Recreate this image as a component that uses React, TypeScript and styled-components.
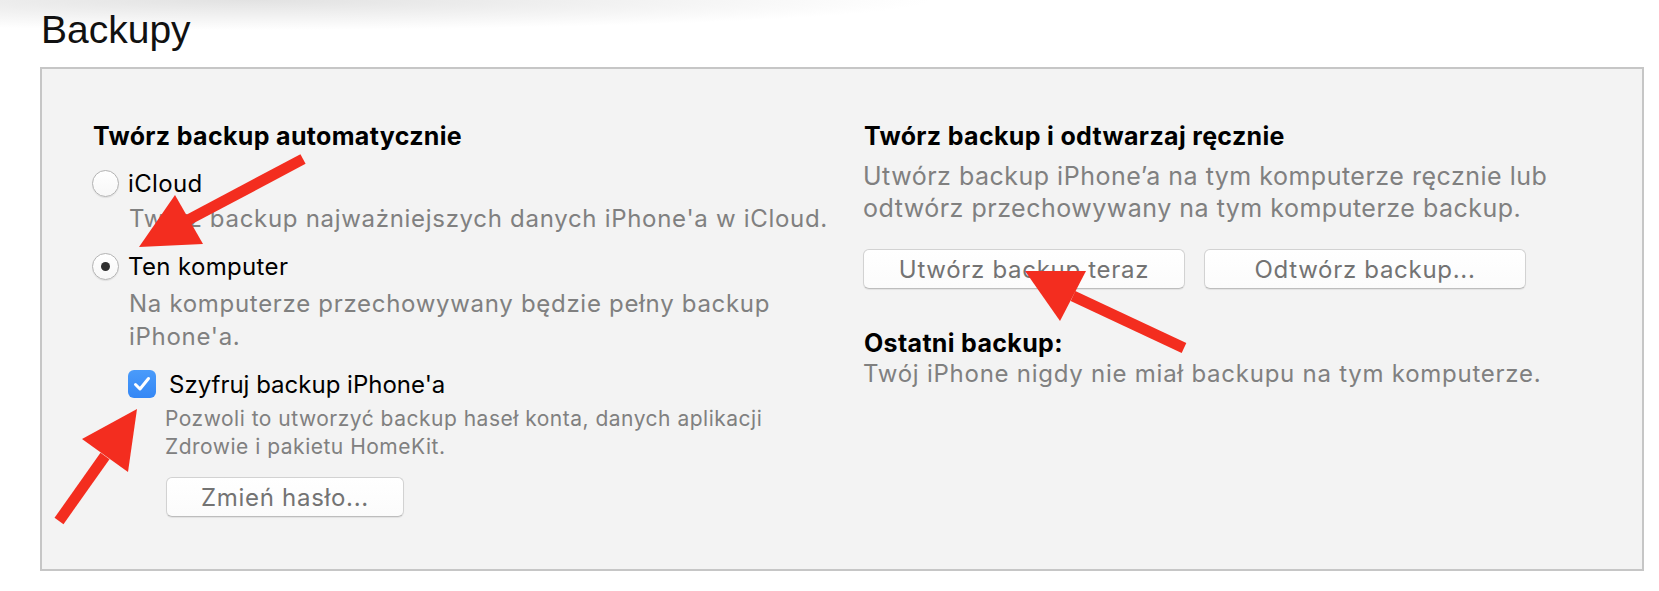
import React from "react";
import styled, { createGlobalStyle } from "styled-components";

const GlobalStyle = createGlobalStyle`
  html, body { margin: 0; padding: 0; background: #fff; }
  body { width: 1659px; height: 591px; overflow: hidden; font-family: Inter, "Noto Sans", sans-serif; }
  * { box-sizing: border-box; }
`;

const Page = styled.div`
  position: relative;
  width: 1659px;
  height: 591px;
  padding: 8px 15px 0 40px;
  background: radial-gradient(ellipse 680px 30px at 250px 0, #e2e2e2 0%, rgba(255, 255, 255, 0) 100%), #fff;
`;

const Title = styled.h1`
  margin: 0;
  font-family: "Liberation Sans", Arial, sans-serif;
  font-weight: 400;
  font-size: 39px;
  line-height: 44px;
  color: #111;
  padding-left: 1px;
`;

const Panel = styled.section`
  margin-top: 15px;
  width: 1604px;
  height: 504px;
  border: 2px solid #c6c6c6;
  background: #f3f3f3;
  display: grid;
  grid-template-columns: 771px 1fr;
  align-items: start;
  padding: 52px 0 0 50px;
`;

const Column = styled.div`
  display: flex;
  flex-direction: column;
  align-items: flex-start;
`;

const SectionTitle = styled.div<{ $mt?: number; $lh?: number }>`
  margin-top: ${(p) => p.$mt ?? 0}px;
  font-size: 25px;
  font-weight: 700;
  letter-spacing: 0.33px;
  line-height: ${(p) => p.$lh ?? 30}px;
  color: #000;
  padding-left: 1px;
  white-space: nowrap;
`;

const OptionRow = styled.label<{ $mt: number }>`
  margin-top: ${(p) => p.$mt}px;
  display: flex;
  align-items: center;
  gap: 9px;
  height: 32px;
  font-size: 24px;
  letter-spacing: 0.35px;
  color: #000;
`;

const Radio = styled.span<{ $checked?: boolean }>`
  width: 27px;
  height: 27px;
  border-radius: 50%;
  background: linear-gradient(#ffffff, #f7f7f7);
  border: 1px solid #b3b3b3;
  box-shadow: 0 1px 1px rgba(0, 0, 0, 0.08);
  display: flex;
  align-items: center;
  justify-content: center;
  &::after {
    content: "";
    display: ${(p) => (p.$checked ? "block" : "none")};
    width: 9px;
    height: 9px;
    border-radius: 50%;
    background: #2f2f2f;
  }
`;

const Desc = styled.div<{ $mt: number; $indent: number; $size: number; $lh: number; $ls: number }>`
  margin-top: ${(p) => p.$mt}px;
  padding-left: ${(p) => p.$indent}px;
  font-size: ${(p) => p.$size}px;
  line-height: ${(p) => p.$lh}px;
  letter-spacing: ${(p) => p.$ls}px;
  color: #808080;
  white-space: nowrap;
`;

const CheckRow = styled.label<{ $mt: number }>`
  margin-top: ${(p) => p.$mt}px;
  padding-left: 36px;
  display: flex;
  align-items: center;
  gap: 13px;
  height: 32px;
  font-size: 24px;
  color: #000;
`;

const CheckBox = styled.span`
  width: 28px;
  height: 28px;
  border-radius: 6px;
  background: linear-gradient(#4a9bfa, #3487f5);
  display: flex;
  align-items: center;
  justify-content: center;
`;

const Button = styled.button<{ $w: number; $mt?: number; $ml?: number }>`
  margin-top: ${(p) => p.$mt ?? 0}px;
  margin-left: ${(p) => p.$ml ?? 0}px;
  width: ${(p) => p.$w}px;
  height: 40px;
  padding: 0;
  border: 1px solid #d2d2d2;
  border-bottom-color: #bdbdbd;
  border-radius: 6px;
  background: linear-gradient(#ffffff, #fbfbfb);
  box-shadow: 0 1px 1px rgba(0, 0, 0, 0.07);
  font-family: Inter, "Noto Sans", sans-serif;
  font-size: 24px;
  letter-spacing: 0.7px;
  color: #737373;
  display: flex;
  align-items: center;
  justify-content: center;
`;

const ButtonRow = styled.div`
  margin-top: 25px;
  display: flex;
  gap: 19px;
`;

const Annotations = styled.svg`
  position: absolute;
  left: 0;
  top: 0;
  width: 1659px;
  height: 591px;
  pointer-events: none;
`;

const RED = "#f32d1f";

const Arrow: React.FC<{ tail: [number, number]; base: [number, number]; head: string }> = ({ tail, base, head }) => (
  <g>
    <line x1={tail[0]} y1={tail[1]} x2={base[0]} y2={base[1]} stroke={RED} strokeWidth={11} />
    <polygon points={head} fill={RED} />
  </g>
);

export default function App() {
  return (
    <>
      <GlobalStyle />
      <Page>
        <Title>Backupy</Title>
        <Panel>
          <Column>
            <SectionTitle>Twórz backup automatycznie</SectionTitle>
            <OptionRow $mt={16}>
              <Radio />
              iCloud
            </OptionRow>
            <Desc $mt={4} $indent={37} $size={24} $lh={32} $ls={0.7}>
              Twórz backup najważniejszych danych iPhone'a w iCloud.
            </Desc>
            <OptionRow $mt={15}>
              <Radio $checked />
              Ten komputer
            </OptionRow>
            <Desc $mt={5} $indent={37} $size={24} $lh={33} $ls={0.7}>
              Na komputerze przechowywany będzie pełny backup
              <br />
              iPhone'a.
            </Desc>
            <CheckRow $mt={15}>
              <CheckBox>
                <svg width="18" height="16" viewBox="0 0 18 16">
                  <path d="M2.5 8.5 L7 13 L15.5 2.5" fill="none" stroke="#fff" strokeWidth="3" strokeLinecap="round" strokeLinejoin="round" />
                </svg>
              </CheckBox>
              Szyfruj backup iPhone'a
            </CheckRow>
            <Desc $mt={5} $indent={73} $size={21} $lh={28} $ls={0.5}>
              Pozwoli to utworzyć backup haseł konta, danych aplikacji
              <br />
              Zdrowie i pakietu HomeKit.
            </Desc>
            <Button $w={238} $mt={16} $ml={74}>
              Zmień hasło...
            </Button>
          </Column>
          <Column>
            <SectionTitle>Twórz backup i odtwarzaj ręcznie</SectionTitle>
            <Desc $mt={9} $indent={0} $size={25} $lh={32} $ls={0.5}>
              Utwórz backup iPhone’a na tym komputerze ręcznie lub
              <br />
              odtwórz przechowywany na tym komputerze backup.
            </Desc>
            <ButtonRow>
              <Button $w={322}>Utwórz backup teraz</Button>
              <Button $w={322}>Odtwórz backup...</Button>
            </ButtonRow>
            <SectionTitle $mt={40} $lh={29}>
              Ostatni backup:
            </SectionTitle>
            <Desc $mt={1} $indent={0} $size={24} $lh={29} $ls={0.75}>
              Twój iPhone nigdy nie miał backupu na tym komputerze.
            </Desc>
          </Column>
        </Panel>
        <Annotations viewBox="0 0 1659 591">
          <Arrow tail={[303, 159]} base={[188, 220]} head="175,195 139,247 203,244" />
          <Arrow tail={[59, 521]} base={[105, 456]} head="82,439 137,409 128,472" />
          <Arrow tail={[1184, 348]} base={[1073, 296]} head="1086,271 1025,271 1060,321" />
        </Annotations>
      </Page>
    </>
  );
}
